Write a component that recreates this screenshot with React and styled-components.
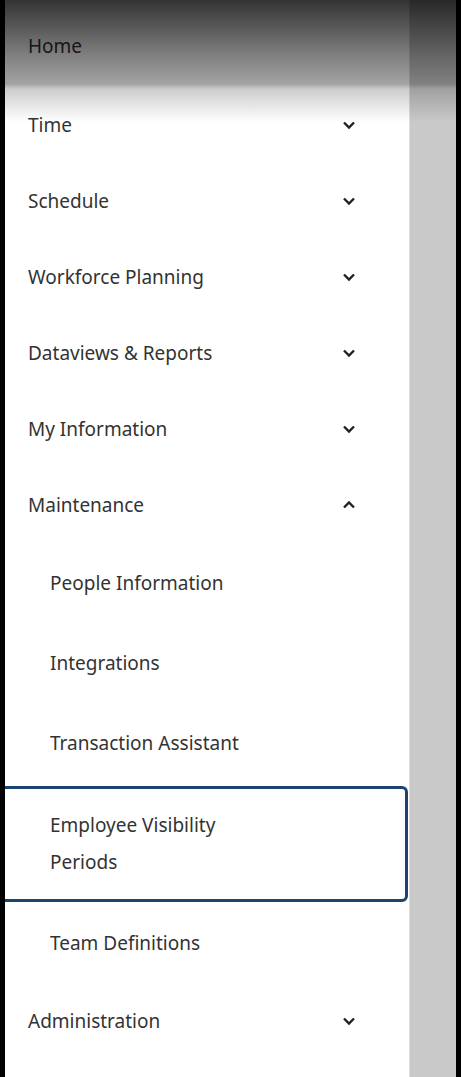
import styled, { createGlobalStyle } from "styled-components";

const GlobalStyle = createGlobalStyle`
  html, body {
    margin: 0;
    padding: 0;
    background: #000;
  }
  body {
    font-family: 'Noto Sans', 'Open Sans', sans-serif;
  }
`

const Screen = styled.div`
  position: relative;
  width: 461px;
  height: 1077px;
  display: flex;
  background: #000;
  overflow: hidden;
`
const Drawer = styled.nav`
  width: 404px;
  margin-left: 5px;
  background: #fff;
  padding-top: 8px;
  border-right: 1px solid #dedede;
  overflow: hidden;
`
const Backdrop = styled.div`
  width: 46px;
  background: #c9c9c9;
`
const Shade = styled.div`
  position: absolute;
  top: 0;
  left: 0;
  right: 0;
  height: 122px;
  pointer-events: none;
  background: linear-gradient(
    to bottom,
    rgba(0, 0, 0, 0.8) 0px,
    rgba(0, 0, 0, 0.5) 55px,
    rgba(0, 0, 0, 0.36) 84px,
    rgba(0, 0, 0, 0.2) 89px,
    rgba(0, 0, 0, 0) 122px
  );
`
const Row = styled.div`
  display: flex;
  align-items: center;
  justify-content: space-between;
  padding: 19.5px 53px 19.5px 23px;
  font-size: 19px;
  line-height: 37px;
  color: #333;
  &:first-child {
    margin-bottom: 3px;
  }
`
const SubRow = styled(Row)`
  padding: 21.5px 20px 21.5px 45px;
`
const FocusedRow = styled(SubRow)`
  margin: 3px 1px 1px -8px;
  padding: 18px 20px 18px 50px;
  border: 3px solid #1c4470;
  border-radius: 6px;
`
const Label = styled.span`
  max-width: ${p => (p.wrap ? "200px" : "none")};
`
const Chevron = ({ up }) => (
  <svg width="14" height="14" viewBox="0 0 14 14">
    <path
      d={up ? "M2 9.5 L7 4.5 L12 9.5" : "M2 4.5 L7 9.5 L12 4.5"}
      fill="none"
      stroke="#222"
      strokeWidth="2.4"
    />
  </svg>
)

const items = [
  { label: "Home" },
  { label: "Time", chevron: "down" },
  { label: "Schedule", chevron: "down" },
  { label: "Workforce Planning", chevron: "down" },
  { label: "Dataviews & Reports", chevron: "down" },
  { label: "My Information", chevron: "down" },
  { label: "Maintenance", chevron: "up" },
  { label: "People Information", sub: true },
  { label: "Integrations", sub: true },
  { label: "Transaction Assistant", sub: true },
  { label: "Employee Visibility Periods", sub: true, focused: true },
  { label: "Team Definitions", sub: true },
  { label: "Administration", chevron: "down" },
]

function App() {
  return (
    <>
      <GlobalStyle />
      <Screen>
        <Drawer>
          {items.map(item => {
            const R = item.focused ? FocusedRow : item.sub ? SubRow : Row
            return (
              <R key={item.label}>
                <Label wrap={item.focused}>{item.label}</Label>
                {item.chevron && <Chevron up={item.chevron === "up"} />}
              </R>
            )
          })}
        </Drawer>
        <Backdrop />
        <Shade />
      </Screen>
    </>
  )
}
export default App;
